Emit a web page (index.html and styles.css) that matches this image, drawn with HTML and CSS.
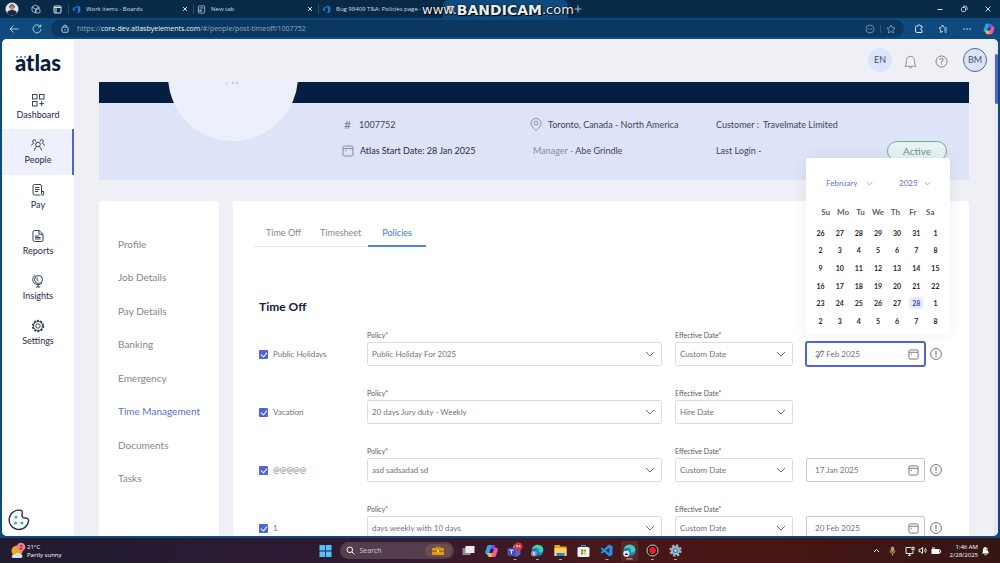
FILE: index.html
```html
<!DOCTYPE html>
<html lang="en">
<head>
<meta charset="utf-8">
<title>Atlas - Policies</title>
<link rel="stylesheet" href="styles.css">
</head>
<body>
<svg class="defs" aria-hidden="true">
  <symbol id="devops" viewBox="0 0 10 10"><path d="M2.600 2.600 3.400 2.400 6.400.8 9.200 2V7.600L6.800 9.200 3.200 8 6.800 8.300V2.600L3 3.300V6.700L1 6V3.800Z" fill="#1583e0"/></symbol>
  <symbol id="close" viewBox="0 0 8 8"><path d="M2 2 6 6M6 2 2 6" stroke="currentColor" fill="none"/></symbol>
  <symbol id="chevron" viewBox="0 0 10 6"><path d="M1 1 5 5 9 1" stroke="currentColor" fill="none"/></symbol>
  <symbol id="calendar" viewBox="0 0 12 12"><path d="M1 2.5Q1 1 2.5 1H9.5Q11 1 11 2.5V9.5Q11 11 9.5 11H2.5Q1 11 1 9.5ZM1 3.6H11M3 5.8H4.4" stroke="currentColor" fill="none"/></symbol>
  <symbol id="alert" viewBox="0 0 12 12"><circle cx="6" cy="6" r="5.4" stroke="currentColor" fill="none" stroke-width=".9"/><path d="M6 2.8V7M6 8V9.2" stroke="currentColor" stroke-width="1.1"/></symbol>
  <symbol id="edge" viewBox="0 0 14 14"><circle cx="7" cy="7" r="6.3" fill="#168bd2"/><path d="M1 6C2 1 7-.2 10.500 1.700 14 4 14 8 10.500 9 8.800 9.300 8 8.500 8.700 7.500 9.200 5.500 7 4 5 4.200 3 4.300 1.500 5 1 6Z" fill="#45cfa0"/><path d="M5 5.500C3 8.500 5.500 12 10 12 7 14.200 2 12.800 1.200 9 .8 6.500 3 5.300 5 5.500Z" fill="#0c58a6"/></symbol>
  <symbol id="copilot" viewBox="0 0 14 14"><path d="M4 1H9L11 5H6L4.500 10H2Q0 10 1 7L2.500 2.500Q3 1 4 1Z" fill="#29a3ea"/><path d="M9 1Q10.500 1 11 3L11.500 5H6L7 1Z" fill="#6b55df"/><path d="M10 4H12Q14 4 13 7L11.500 11.500Q11 13 10 13H5L3 9H8Z" fill="#ec5c9f"/><path d="M2 9H8L7 13H5Q3.500 13 3 11Z" fill="#f7b73c"/></symbol>
</svg>

<header class="titlebar">
  <div class="window-tools">
    <svg width="14" height="14" viewBox="0 0 14 14"><circle cx="7" cy="7" r="6.500" fill="#dfe3ea"/><path d="M4.500 4Q7 .5 9.500 4V6H4.500Z" fill="#222"/><ellipse cx="7" cy="5.500" rx="2" ry="2.600" fill="#b98b70"/><path d="M2 11Q3 8 7 8 11 8 12 11 7 16 2 11Z" fill="#1b2740"/></svg>
    <svg width="10" height="10" viewBox="0 0 10 10" fill="none" stroke="#c3d0dc" stroke-width=".8"><path d="M1 3 4.500 1 8 3V5M1 3V7L4.500 9V5L1 3M4.500 5 8 3"/><rect x="5" y="5" width="4" height="4" rx="1"/></svg>
    <svg width="9" height="9" viewBox="0 0 9 9" fill="none" stroke="#dde5ec"><rect x="1" y="1" width="7" height="7" rx="1"/><path d="M1 2.500H8M3 3V8"/></svg>
  </div>
  <div class="tabs">
    <div class="tab"><svg class="tab-icon"><use href="#devops"/></svg><span class="tab-title">Work items - Boards</span><button class="tab-close" aria-label="Close tab"><svg><use href="#close"/></svg></button></div>
    <div class="tab"><svg class="tab-icon" viewBox="0 0 10 10" fill="none" stroke="#b8c7d5" stroke-width=".9"><rect x="1.500" y="1" width="7" height="8" rx="1"/><path d="M3 3.300H7M3 5.500H5V7H3Z"/></svg><span class="tab-title">New tab</span><button class="tab-close" aria-label="Close tab"><svg><use href="#close"/></svg></button></div>
    <div class="tab"><svg class="tab-icon"><use href="#devops"/></svg><span class="tab-title">Bug 98409 T&amp;A: Policies page -</span></div>
    <div class="tab tab-current"><svg class="tab-icon" viewBox="0 0 10 10"><rect x="1" y="1" width="8" height="8" fill="#e9ecf5"/><path d="M2 3H8" stroke="#b53fd0"/><path d="M2 6H8" stroke="#1c3159"/></svg></div>
    <button class="new-tab" aria-label="New tab"><svg width="8" height="8" viewBox="0 0 8 8"><path d="M4 .5V7.500M.5 4H7.500" stroke="#c9d5df" stroke-width=".8"/></svg></button>
  </div>
  <div class="window-buttons">
    <button aria-label="Minimize"><svg width="8" height="8" viewBox="0 0 8 8"><path d="M1.500 4.500H6.500" stroke="#dfe7ee"/></svg></button>
    <button aria-label="Restore"><svg width="8" height="8" viewBox="0 0 8 8" fill="none" stroke="#dfe7ee" stroke-width=".9"><rect x="1.500" y="2.500" width="4" height="4" rx="1"/><path d="M3 1.200H5.500Q7 1.200 7 2.700V5"/></svg></button>
    <button aria-label="Close"><svg width="8" height="8" viewBox="0 0 8 8"><path d="M1.500 1.500 6.500 6.500M6.500 1.500 1.500 6.500" stroke="#dfe7ee" stroke-width=".9"/></svg></button>
  </div>
  <div class="watermark"><span>www.</span><b>BANDICAM</b><span>.com</span></div>
</header>

<div class="toolbar">
  <button aria-label="Back"><svg width="10" height="10" viewBox="0 0 10 10" fill="none" stroke="#c5d4e1" stroke-width=".9"><path d="M9.500 5H1M4.500 1.500 1 5 4.500 8.500"/></svg></button>
  <button aria-label="Refresh"><svg width="10" height="10" viewBox="0 0 10 10" fill="none" stroke="#c5d4e1" stroke-width=".9"><path d="M8.300 2.600A4 4 0 1 0 9 5M8.700.5V3H6.200"/></svg></button>
  <div class="address">
    <svg width="8" height="9" viewBox="0 0 8 9" fill="none" stroke="#c5d4e1" stroke-width=".9"><rect x="1" y="3" width="6" height="5.300" rx="1"/><path d="M2.500 3V2Q4-.3 5.500 2V3M4 5V6.300"/></svg>
    <span class="url">https://<b>core-dev.atlasbyelements.com</b>/#/people/post-timeoff/1007752</span>
    <svg width="10" height="10" viewBox="0 0 10 10" fill="none" stroke="#7e9ab3" stroke-width=".8"><circle cx="5" cy="5" r="4"/><path d="M2.800 5H7.200" stroke-dasharray="1 .7" stroke-width="1"/></svg>
    <i class="rule"></i>
    <svg width="10" height="10" viewBox="0 0 10 10" fill="none" stroke="#8ba5bb" stroke-width=".8"><path d="M5 1 6.200 3.700 9 4 6.900 6 7.500 9 5 7.500 2.500 9 3.100 6 1 4 3.800 3.700Z"/></svg>
  </div>
  <div class="toolbar-end">
    <button aria-label="Extensions"><svg width="10" height="10" viewBox="0 0 10 10" fill="none" stroke="#d5e0e9"><path d="M3 2H4A1.200 1.200 0 0 1 6.400 2H8V4A1.200 1.200 0 0 0 8 6.400V8.500H3Q1.500 8.500 1.500 7V3.500Q1.500 2 3 2"/></svg></button>
    <button aria-label="Favorites"><svg width="10" height="10" viewBox="0 0 10 10" fill="none" stroke="#d5e0e9" stroke-width=".9"><path d="M6 3.500 4.500 1 3.300 3.500 1 4 2.700 5.800 2.300 8.500 5 7.200M6 4H9M6 6H9M6.500 8H9"/></svg></button>
    <button aria-label="More"><svg width="10" height="10" viewBox="0 0 10 10" fill="#d5e0e9"><circle cx="2" cy="5" r=".8"/><circle cx="5" cy="5" r=".8"/><circle cx="8" cy="5" r=".8"/></svg></button>
    <button aria-label="Copilot"><svg width="12" height="12"><use href="#copilot"/></svg></button>
  </div>
</div>

<div class="app">
  <aside class="sidebar">
    <div class="logo"><i class="logo-dots"></i>atlas</div>
    <nav class="main-nav">
      <a href="#dashboard"><svg viewBox="0 0 14 14"><rect x="1.500" y="1.500" width="4.500" height="4.500"/><rect x="8.500" y="1.500" width="4.500" height="4.500"/><rect x="1.500" y="8.500" width="4.500" height="4.500"/><path d="M10.700 8.200V13M8.300 10.600H13.100"/></svg>Dashboard</a>
      <a href="#people" class="current"><svg viewBox="0 0 14 14"><circle cx="7" cy="6.500" r="2.300"/><path d="M3.300 12.500Q4 9.300 5.700 8.500M10.700 12.500Q10 9.300 8.300 8.500M3 5.500Q.8 4 2 2.300 3.500 1 4.700 2.300V3.500M11 5.500Q13.200 4 12 2.300 10.500 1 9.300 2.300V3.500M.5 7.500Q.8 6 2.500 5.600M13.500 7.500Q13.200 6 11.500 5.600"/></svg>People</a>
      <a href="#pay"><svg viewBox="0 0 14 14"><path d="M9.500 12H4Q2 12 2 10V3Q2 1.500 3.500 1.500H9Q10.500 1.500 10.500 3V10Q10.500 12.500 12 12.300 13 12 12.800 8.500H10.500M4 4.500H8.500M4 6.500H8.500M4 8.500H7"/></svg>Pay</a>
      <a href="#reports"><svg viewBox="0 0 14 14"><path d="M3.500 1.500H8L12 5.300V11Q12 12.500 10.500 12.500H3.500Q2 12.500 2 11V3Q2 1.500 3.500 1.500M8 1.500V5.300H12M4 7H8M4 8.500H9.500M4 10H9.500"/></svg>Reports</a>
      <a href="#insights"><svg viewBox="0 0 14 14"><circle cx="7.500" cy="5.500" r="4"/><path d="M4.500 1Q1 3 2 7.500 4 11.500 9 10.300L11 9M7 10.500V13M4.800 13H9.200M6.200 3.500V5.500Q6.200 7 7.500 7"/></svg>Insights</a>
      <a href="#settings"><svg viewBox="0 0 14 14"><circle cx="7" cy="7" r="5.300" stroke-width="1.800" stroke-dasharray="2.100 1.230"/><circle cx="7" cy="7" r="4.500"/><circle cx="7" cy="7" r="2.200"/></svg>Settings</a>
    </nav>
    <button class="cookie" aria-label="Cookie settings"><svg width="22" height="22" viewBox="0 0 22 22"><path d="M13.500 1.500A9.700 9.700 0 1 0 20.500 12Q21 9.500 17.500 9 13.500 9.500 14 5 15 2.500 13.500 1.500Z" fill="#fff" stroke="#352a62" stroke-width="1.400"/><g fill="#2fbf94"><circle cx="8" cy="8" r="1.600"/><circle cx="7.500" cy="14" r="1.600"/><circle cx="14" cy="14" r="1.600"/></g></svg></button>
  </aside>

  <div class="page">
    <div class="topbar">
      <button class="round">EN</button>
      <button class="bell" aria-label="Notifications"><svg width="13" height="14" viewBox="0 0 13 14" fill="none" stroke="#848992" stroke-width=".9"><path d="M1 11.300Q2.500 10 2.500 5.500 2.700 1.300 6.500 1.300T10.500 5.500Q10.500 10 12 11.300ZM5 12.300Q6.500 14 8 12.300"/></svg></button>
      <button aria-label="Help"><svg width="13" height="13" viewBox="0 0 13 13" fill="none" stroke="#70757f" stroke-width=".9"><circle cx="6.500" cy="6.500" r="5.500"/><path d="M4.800 5Q5 3.400 6.500 3.400 8.300 3.500 8.100 5 8 5.900 6.500 6.500V7.800M6.500 8.700V9.700"/></svg></button>
      <button class="round outlined">BM</button>
    </div>

    <main class="content">
      <section class="banner">
        <div class="avatar"><svg width="14" height="2" viewBox="0 0 14 2"><path d="M0 1H1M6 1H8M10 1H12" stroke="#9ea2ac"/></svg></div>
        <div class="facts">
          <div class="fact"><span class="hash">#</span><span>1007752</span></div>
          <div class="fact"><svg width="12" height="14" viewBox="0 0 12 14" fill="none" stroke="#858a99" stroke-width=".9"><path d="M6 12.800Q1 8 1 5.300A5 4.800 0 0 1 11 5.300Q11 8 6 12.800Z"/><circle cx="6" cy="5.300" r="1.900"/></svg><span>Toronto, Canada - North America</span></div>
          <div class="fact tight"><span>Customer :</span><span>Travelmate Limited</span></div>
          <div class="fact dark"><svg width="12" height="12" class="muted"><use href="#calendar"/></svg><span>Atlas Start Date: 28 Jan 2025</span></div>
          <div class="fact manager"><span class="muted">Manager -</span><span>Abe Grindle</span></div>
          <div class="fact between"><span>Last Login -</span><span class="status">Active</span></div>
        </div>
      </section>

      <div class="columns">
        <nav class="card side-nav">
          <a href="#profile">Profile</a>
          <a href="#job">Job Details</a>
          <a href="#paydetails">Pay Details</a>
          <a href="#banking">Banking</a>
          <a href="#emergency">Emergency</a>
          <a href="#time" class="current">Time Management</a>
          <a href="#documents">Documents</a>
          <a href="#tasks">Tasks</a>
        </nav>

        <section class="card policies">
          <nav class="sub-tabs">
            <a href="#timeoff">Time Off</a>
            <a href="#timesheet">Timesheet</a>
            <a href="#policies" class="current">Policies</a>
          </nav>
          <h2>Time Off</h2>
          <form class="rows">
            <div class="row">
              <label class="check"><input type="checkbox" checked>Public Holidays</label>
              <label class="field"><span>Policy<em>*</em></span><span class="box"><select><option>Public Holiday For 2025</option></select><svg><use href="#chevron"/></svg></span></label>
              <label class="field"><span>Effective Date<em>*</em></span><span class="box"><select><option>Custom Date</option></select><svg><use href="#chevron"/></svg></span></label>
              <div class="date">
                <div class="box date-box active"><input type="text" value="27 Feb 2025" aria-label="Public Holidays effective date"><svg class="cal"><use href="#calendar"/></svg></div>
                <svg class="info"><use href="#alert"/></svg>
                <svg class="caret" viewBox="0 0 5 9"><path d="M4.500.5 .5 8.500" stroke="#777"/></svg>
                <div class="picker">
                  <div class="picker-head">
                    <span class="pick"><select class="month" aria-label="Month"><option>February</option></select><svg><use href="#chevron"/></svg></span>
                    <span class="pick"><select class="year" aria-label="Year"><option>2025</option></select><svg><use href="#chevron"/></svg></span>
                  </div>
                  <div class="weekdays"><span>Su</span><span>Mo</span><span>Tu</span><span>We</span><span>Th</span><span>Fr</span><span>Sa</span></div>
                  <table class="days">
                    <tr><td>26</td><td>27</td><td>28</td><td>29</td><td>30</td><td>31</td><td>1</td></tr>
                    <tr><td>2</td><td>3</td><td>4</td><td>5</td><td>6</td><td>7</td><td>8</td></tr>
                    <tr><td>9</td><td>10</td><td>11</td><td>12</td><td>13</td><td>14</td><td>15</td></tr>
                    <tr><td>16</td><td>17</td><td>18</td><td>19</td><td>20</td><td>21</td><td>22</td></tr>
                    <tr><td>23</td><td>24</td><td>25</td><td>26</td><td>27</td><td><b>28</b></td><td>1</td></tr>
                    <tr><td>2</td><td>3</td><td>4</td><td>5</td><td>6</td><td>7</td><td>8</td></tr>
                  </table>
                </div>
              </div>
            </div>
            <div class="row">
              <label class="check"><input type="checkbox" checked>Vacation</label>
              <label class="field"><span>Policy<em>*</em></span><span class="box"><select><option>20 days Jury duty - Weekly</option></select><svg><use href="#chevron"/></svg></span></label>
              <label class="field"><span>Effective Date<em>*</em></span><span class="box"><select><option>Hire Date</option></select><svg><use href="#chevron"/></svg></span></label>
            </div>
            <div class="row">
              <label class="check"><input type="checkbox" checked>@@@@@</label>
              <label class="field"><span>Policy<em>*</em></span><span class="box"><select><option>asd sadsadad sd</option></select><svg><use href="#chevron"/></svg></span></label>
              <label class="field"><span>Effective Date<em>*</em></span><span class="box"><select><option>Custom Date</option></select><svg><use href="#chevron"/></svg></span></label>
              <div class="date">
                <div class="box date-box"><input type="text" value="17 Jan 2025" aria-label="@@@@@ effective date"><svg class="cal"><use href="#calendar"/></svg></div>
                <svg class="info"><use href="#alert"/></svg>
              </div>
            </div>
            <div class="row">
              <label class="check"><input type="checkbox" checked>1</label>
              <label class="field"><span>Policy<em>*</em></span><span class="box"><select><option>days weekly with 10 days</option></select><svg><use href="#chevron"/></svg></span></label>
              <label class="field"><span>Effective Date<em>*</em></span><span class="box"><select><option>Custom Date</option></select><svg><use href="#chevron"/></svg></span></label>
              <div class="date">
                <div class="box date-box"><input type="text" value="20 Feb 2025" aria-label="1 effective date"><svg class="cal"><use href="#calendar"/></svg></div>
                <svg class="info"><use href="#alert"/></svg>
              </div>
            </div>
          </form>
        </section>
      </div>
    </main>
  </div>
  <div class="scroll-track"><div class="scroll-thumb"></div></div>
</div>

<footer class="taskbar">
  <div class="weather">
    <svg width="17" height="18" viewBox="0 0 17 18"><circle cx="7" cy="9" r="5.500" fill="#f5a11e"/><path d="M4 16Q1 16 2 13.500 3 12 5 12.500 7 9.500 10 12 12.500 12 12.500 14.500 12 16 10.500 16Z" fill="#cfe2fb"/><circle cx="11" cy="5" r="4.300" fill="#f2858b"/><path d="M9.700 3.800Q11 2.300 12.200 3.800 12 5 9.800 7H12.400" fill="none" stroke="#5a2530" stroke-width=".9"/></svg>
    <div>21°C<br>Partly sunny</div>
  </div>
  <div class="dock">
    <svg height="14" viewBox="0 0 14 14" fill="#4cc4f5"><path d="M1 1H6.600V6.600H1ZM7.400 1H13V6.600H7.400ZM1 7.400H6.600V13H1ZM7.400 7.400H13V13H7.400Z"/></svg>
    <label class="search"><svg width="9" height="9" viewBox="0 0 9 9" fill="none" stroke="#fff"><circle cx="3.800" cy="3.800" r="2.800"/><path d="M6 6 8.300 8.300"/></svg><input type="text" placeholder="Search" aria-label="Search"><span class="chip"><svg width="12" height="10" viewBox="0 0 12 10"><path d="M4 2V1H8V2" fill="none" stroke="#d98b12"/><rect x="0" y="2" width="12" height="7" rx="1" fill="#e39a1b"/><path d="M0 5.200H12" stroke="#8f5406"/><rect x="5" y="4.300" width="2" height="2" fill="#ffe08a"/></svg></span></label>
    <svg height="14" viewBox="0 0 14 14"><rect x="1" y="4" width="8" height="7" fill="#8d8d90"/><rect x="4" y="2" width="9" height="7" fill="#ececec"/></svg>
    <svg height="14"><use href="#copilot"/></svg>
    <svg height="18" viewBox="0 0 16 18"><circle cx="9" cy="5" r="2.500" fill="#7b83eb"/><path d="M6 7H14V12Q12 15.500 8 14.500Z" fill="#5b62c9"/><rect x="1" y="6" width="8" height="8" rx="1" fill="#4650b8"/><path d="M3 8.200H7M5 8.200V12" stroke="#fff"/><circle cx="12" cy="4.500" r="4" fill="#d13438"/><path d="M9.800 4.800Q11.500 5.500 11.300 3.500 10.500 2.500 9.800 3.600 10.500 4.900 11.300 3.800M12 4.200H14.300M13.100 3V5.400" stroke="#fff" stroke-width=".6" fill="none"/><path d="M7 17.500H10" stroke="#b0a0a0"/></svg>
    <svg height="18" viewBox="0 0 15 18"><use href="#edge" width="13" height="13" x="1" y="2"/><circle cx="4" cy="11.500" r="3" fill="#8f959b"/><path d="M4 10V13" stroke="#fff"/><path d="M6 17.500H9" stroke="#b0a0a0"/></svg>
    <svg height="18" viewBox="0 0 14 18"><path d="M1 3H6L7 4.500H13V14H1Z" fill="#e5a51e"/><rect x="1" y="6" width="12" height="8" fill="#ffd35c"/><path d="M3 14V11H11V14" fill="#2584d8"/><path d="M5.500 17.500H8.500" stroke="#b0a0a0"/></svg>
    <svg height="14" viewBox="0 0 14 14"><path d="M5 3V1.500H9V3" fill="none" stroke="#3aa7e8"/><rect x="1" y="3" width="12" height="10" rx="1.500" fill="#f3f3f3"/><path d="M4.500 5.500H6.700V7.700H4.500Z" fill="#f25022"/><path d="M7.300 5.500H9.500V7.700H7.300Z" fill="#7fba00"/><path d="M4.500 8.300H6.700V10.500H4.500Z" fill="#00a4ef"/><path d="M7.300 8.300H9.500V10.500H7.300Z" fill="#ffb900"/></svg>
    <svg height="18" viewBox="0 0 14 18"><path d="M9.500 2.500 13 4V13L9.500 14.500 1 6.500 2.500 5.500 9.800 11V6L2.500 11.500 1 10.500Z" fill="#1f93e0"/><path d="M6 17.500H9" stroke="#b0a0a0"/></svg>
    <svg class="running" height="20" viewBox="0 0 19 20"><use href="#edge" width="15" height="15" x="2" y="2"/><circle cx="6" cy="13" r="3.500" fill="#e3e5ea"/><path d="M4 14.500Q6 10.500 8 14.500Z" fill="#18243c"/><path d="M6 18.800H13" stroke="#f39a55" stroke-width="1.500"/></svg>
    <svg height="18" viewBox="0 0 14 18"><circle cx="7" cy="8.500" r="5.500" fill="#0d0d0d" stroke="#d6d6d6"/><circle cx="7" cy="8.500" r="3.500" fill="#ee1c1c"/><path d="M5.500 17.500H8.500" stroke="#b0a0a0"/></svg>
    <svg height="18" viewBox="0 0 14 18"><circle cx="7" cy="8.500" r="5.200" fill="none" stroke="#a9b4c0" stroke-width="2" stroke-dasharray="2.300 1.780"/><circle cx="7" cy="8.500" r="4.500" fill="#a9b4c0"/><circle cx="7" cy="8.500" r="2.600" fill="#2088d8"/><circle cx="7" cy="8.500" r="1.200" fill="#dbe7f2"/><path d="M5.500 17.500H8.500" stroke="#b0a0a0"/></svg>
  </div>
  <div class="tray">
    <svg width="7" height="5" viewBox="0 0 7 5" fill="none" stroke="#fff"><path d="M1 4 3.500 1.500 6 4"/></svg>
    <svg width="7" height="10" viewBox="0 0 7 10" fill="none" stroke="#cf9a6a"><rect x="2.300" y="1" width="2.400" height="4.500" rx="1.200" fill="#cf9a6a"/><path d="M1 4.500Q1 7.200 3.500 7.200T6 4.500M3.500 7.200V9.500"/></svg>
    <div class="tray-group">
      <svg width="10" height="10" viewBox="0 0 10 10" fill="none" stroke="#fff" stroke-width=".9"><path d="M6 1.500H1V7.500H8V5M3 9.300H6M4.500 7.500V9.300"/><rect x="7" y="1.300" width="2" height="2.500"/></svg>
      <svg width="10" height="9" viewBox="0 0 10 9" fill="none" stroke="#fff" stroke-width=".9"><path d="M1 3.300H2.500L4.500 1.500V7.500L2.500 5.700H1ZM6 3.300Q7 4.500 6 5.700M7.300 2.200Q9.300 4.500 7.300 6.800"/></svg>
      <svg width="10" height="8" viewBox="0 0 10 8"><rect x="1" y="2.500" width="7" height="4" fill="#fff" stroke="#fff"/><path d="M8.500 3.500H9.500V5.500H8.500M1 1H4" stroke="#fff"/></svg>
    </div>
    <div class="clock">1:46 AM<br>2/28/2025</div>
    <svg width="9" height="10" viewBox="0 0 9 10" fill="#fff"><path d="M1 7.500Q2 6.500 2 4 2.200 1 4.500 1T7 4Q7 6.500 8 7.500ZM3.500 8.300H5.500V9.300H3.500Z"/><path d="M5 1.500H8L5.500 4H8" fill="none" stroke="#421918" stroke-width=".8"/></svg>
  </div>
</footer>
</body>
</html>
```

FILE: styles.css
```css
* { box-sizing: border-box; }

body {
  margin: 0;
  height: 100vh;
  display: flex;
  flex-direction: column;
  overflow: hidden;
  background: #0e4a7d;
  font-family: Lato, sans-serif;
  font-size: 9px;
  line-height: 12px;
  color: #3b4358;
}

button {
  display: flex;
  align-items: center;
  justify-content: center;
  padding: 0;
  border: 0;
  background: none;
  color: inherit;
  font: inherit;
}

a { color: inherit; text-decoration: none; }
svg { flex: none; display: block; }
.defs { position: absolute; width: 0; height: 0; }

/* Browser chrome */
.titlebar {
  position: relative;
  flex: none;
  display: flex;
  align-items: center;
  height: 18px;
  background: #072a48;
  color: #d3dde6;
  font: 7px/10px "Open Sans", sans-serif;
}
.window-tools { display: flex; align-items: center; gap: 12px; width: 68px; padding-left: 5px; }
.tabs { flex: 1; display: flex; align-items: center; height: 18px; }
.tab {
  display: flex;
  align-items: center;
  gap: 5px;
  width: 125px;
  height: 10px;
  padding: 0 4px 0 3px;
  border-left: 1px solid #2a4c69;
  white-space: nowrap;
}
.tab-icon { width: 9px; height: 9px; }
.tab-title { flex: 1; font-size: 6px; }
.tab-close svg { width: 8px; height: 8px; }
.tab-current { height: 18px; border: 0; border-radius: 5px 5px 0 0; background: #0f4a7c; }
.new-tab { margin-left: 6px; }
.window-buttons { display: flex; gap: 16px; padding-right: 8px; }
.watermark {
  position: absolute;
  left: 422px;
  top: 2px;
  display: flex;
  align-items: center;
  height: 16px;
  color: #e9eef3;
  font: 13px/16px "DejaVu Sans", sans-serif;
  text-shadow: 0 0 2px #000, 1px 1px 1px #000;
}
.watermark b { font-size: 14px; }

.toolbar {
  flex: none;
  display: flex;
  align-items: center;
  height: 21px;
  padding: 0 5px 0 9px;
  gap: 13px;
  background: #0e4a7d;
}
.address {
  flex: 1;
  display: flex;
  align-items: center;
  gap: 7px;
  height: 17px;
  margin-left: -4px;
  padding: 0 8px 0 10px;
  border-radius: 9px;
  background: #0b3860;
  color: #91a9bf;
  font: 7px/10px "Open Sans", sans-serif;
}
.address .url { flex: 1; padding-left: 1px; }
.address b { color: #f0f5f9; font-weight: 400; }
.rule { width: 1px; height: 8px; margin: 0 -2px; background: #2e577b; }
.toolbar-end { display: flex; align-items: center; gap: 14px; margin-left: -3px; }
.toolbar-end button:last-child { margin-left: -3px; }

/* Application shell */
.app {
  position: relative;
  flex: 1;
  min-height: 0;
  display: flex;
  margin: 0 2px 2px;
  border-radius: 5px;
  overflow: hidden;
  background: #eff0f5;
}
.sidebar {
  flex: none;
  display: flex;
  flex-direction: column;
  width: 72px;
  background: #fff;
}
.logo {
  position: relative;
  display: flex;
  justify-content: center;
  height: 45px;
  padding-top: 12px;
  color: #0a1d40;
  font: 900 22px/24px Lato, sans-serif;
}
.logo-dots {
  position: absolute;
  left: 14px;
  top: 17px;
  width: 2px;
  height: 2px;
  border-radius: 50%;
  background: #3b7cff;
  box-shadow: 4px 0 #8b3fe8, 8px 0 #c92fd0;
}
.main-nav { display: grid; grid-auto-rows: 1fr; height: 272px; }
.main-nav a {
  display: flex;
  flex-direction: column;
  align-items: center;
  justify-content: center;
  gap: 2px;
  color: #1d2b4c;
}
.main-nav svg { width: 14px; height: 14px; fill: none; stroke: #38425c; stroke-width: 1; }
.main-nav .current { border-right: 2px solid #4f63d2; padding-left: 2px; background: #eef0fb; }
.cookie { margin: auto 0 5px 6px; align-self: flex-start; }

.page { flex: 1; min-width: 0; display: flex; flex-direction: column; }
.topbar {
  flex: none;
  display: flex;
  align-items: center;
  justify-content: flex-end;
  gap: 15px;
  height: 43px;
  padding: 0 7px 2px 0;
}
.topbar svg { margin-top: 4px; }
.bell { margin: 0 3px 0 -3px; }
.round {
  width: 24px;
  height: 24px;
  border-radius: 50%;
  background: #dce3fc;
  color: #4b5264;
}
.outlined { border: 1px solid #5b6280; }
.content { flex: 1; min-height: 0; padding: 0 25px; }

.scroll-track { flex: none; width: 4px; padding: 15px 0 0 1px; background: #e9eaf0; }
.scroll-thumb { height: 50px; border-radius: 2px; background: #4b62cf; }

/* Profile banner */
.banner {
  position: relative;
  height: 98px;
  border-top: 21px solid #051e42;
  background: #dee4f8;
  clip-path: inset(0);
}
.avatar {
  position: absolute;
  left: 69px;
  top: -92px;
  width: 130px;
  height: 130px;
  display: flex;
  align-items: center;
  justify-content: center;
  border-radius: 50%;
  background: #eceffc;
}
.avatar svg { margin-top: 13px; }
.facts {
  display: grid;
  grid-template-columns: 188px 186px 1fr;
  grid-auto-rows: 26px;
  padding: 9px 22px 0 243px;
}
.fact { display: flex; align-items: center; gap: 6px; white-space: nowrap; }
.dark { color: #252b3c; }
.muted { color: #858a99; }
.hash { width: 11px; color: #7b8090; font-size: 12px; text-align: center; }
.tight { gap: 4px; }
.manager { gap: 2px; padding-left: 3px; }
.between { justify-content: space-between; }
.status {
  width: 60px;
  padding: 3px 0;
  border: 1px solid #7fa79c;
  border-radius: 10px;
  background: #e6f3f2;
  color: #6f9588;
  font-size: 10px;
  text-align: center;
}

/* Cards */
.columns { display: flex; gap: 14px; margin-top: 21px; }
.card { border-radius: 3px; background: #fff; }
.side-nav {
  flex: none;
  display: grid;
  grid-template-rows: repeat(8, 1fr);
  width: 120px;
  height: 368px;
  padding: 26px 0 74px 19px;
  color: #84868c;
  font-size: 10px;
}
.side-nav a { display: flex; align-items: center; }
.side-nav .current { color: #5b6fd6; }
.policies { flex: 1; padding: 19px 27px 0 26px; }
.sub-tabs { display: flex; margin-left: -5px; color: #85878e; }
.sub-tabs a { padding: 7px 7px 7px 12px; border-bottom: 1px solid #e8e9ec; }
.sub-tabs .current { padding: 7px 14px 6px; border-bottom: 2px solid #4f84e0; color: #3f7be0; }
.policies h2 { margin: 51px 0 12px; color: #10203f; font-size: 12px; line-height: 18px; font-weight: 700; }

.row {
  display: grid;
  grid-template-columns: 95px minmax(0, 1fr) 118px 136px;
  column-gap: 13px;
  align-items: end;
  height: 38px;
  margin-bottom: 20px;
}
.row, .row select, .row input { font-size: 8px; color: #70737b; }
.check { display: flex; align-items: center; gap: 5px; height: 24px; white-space: nowrap; }
.check input {
  appearance: none;
  display: flex;
  align-items: center;
  justify-content: center;
  width: 9px;
  height: 9px;
  margin: 0;
  border-radius: 1px;
  background: #5265d0;
}
.check input::before {
  content: "";
  width: 3px;
  height: 5px;
  border: solid #fff;
  border-width: 0 1px 1px 0;
  rotate: 40deg;
}
.field { display: flex; flex-direction: column; gap: 1px; color: #555962; font-size: 7px; }
em { color: #dc2f4a; font-style: normal; }
.box {
  display: grid;
  grid-template-columns: minmax(0, 1fr) 10px;
  align-items: center;
  height: 24px;
  padding-right: 6px;
  border: 1px solid #dcdde1;
  border-radius: 2px;
  background: #fff;
}
.box svg { grid-area: 1 / 2; width: 10px; height: 6px; color: #6c6f77; pointer-events: none; }
select, input[type="text"] {
  appearance: none;
  min-width: 0;
  margin: 0;
  padding: 0 0 0 4px;
  border: 0;
  outline: 0;
  background: none;
  font-family: inherit;
}
.box select { grid-area: 1 / 1 / 2 / 3; height: 22px; }
.date { position: relative; display: flex; align-items: center; gap: 5px; }
.date-box { width: 119px; border-color: #c6c8ce; }
.date-box input { padding-left: 8px; }
.date-box .cal { width: 11px; height: 11px; }
.active { border-color: #5265d0; box-shadow: 0 0 0 1px #5265d0; }
.info { width: 12px; height: 12px; color: #60636b; }
.caret { position: absolute; left: 11px; top: 8px; width: 5px; height: 9px; }

/* Date picker */
.picker {
  position: absolute;
  left: 0;
  bottom: 32px;
  width: 144px;
  height: 176px;
  padding: 19px 5px 0;
  border-radius: 2px;
  background: #fff;
  box-shadow: 0 0 14px rgb(30 40 80 / 8%);
}
.picker-head { display: flex; justify-content: space-between; padding: 0 14px 0 15px; }
.pick { display: flex; align-items: center; }
.pick svg { width: 7px; height: 5px; color: #7e83a8; }
.row .pick select { padding: 0; color: #6373cf; font-size: 8px; line-height: 12px; }
.month { width: 40px; }
.year { width: 25px; }
.weekdays {
  display: grid;
  grid-template-columns: repeat(7, 1fr);
  margin: 17px 6px 6px;
  color: #5d6068;
  font-size: 8px;
  font-weight: 700;
  text-align: center;
}
.days {
  width: 100%;
  height: 106px;
  table-layout: fixed;
  border-collapse: collapse;
  color: #24272e;
  font-size: 7px;
  font-weight: 700;
  text-align: center;
}
.days td { padding: 0; }
.days b { display: block; width: 14px; margin: auto; border-radius: 2px; background: #e8ebfb; color: #4457c8; }

/* Windows taskbar */
.taskbar {
  flex: none;
  display: flex;
  align-items: center;
  justify-content: space-between;
  height: 25px;
  padding: 0 10px;
  background: linear-gradient(90deg, #211c31 0%, #2c1a33 30%, #351a30 40%, #45181c 60%, #481515 75%, #351615 100%);
  color: #fff;
  font: 6px/8px "Open Sans", sans-serif;
}
.weather { flex: 1; display: flex; align-items: center; }
.dock { flex: none; display: flex; align-items: center; gap: 6px; }
.dock > svg { width: 17px; }
.search {
  display: flex;
  align-items: center;
  gap: 5px;
  width: 114px;
  height: 17px;
  padding: 0 2px 0 6px;
  border-radius: 9px;
  background: #543d4d;
}
.search input { flex: 1; padding: 0; font-size: 7px; color: #fff; }
.search input::placeholder { color: #d9d0d6; }
.chip { display: flex; align-items: center; justify-content: center; width: 27px; height: 13px; border-radius: 7px; background: #6a5049; }
.running { background: rgb(255 255 255 / 8%); border-radius: 2px; }
.tray { flex: 1; display: flex; align-items: center; justify-content: flex-end; gap: 9px; }
.tray-group { display: flex; align-items: center; gap: 3px; }
.clock { text-align: right; }
.clock + svg { margin-left: -6px; }
```
